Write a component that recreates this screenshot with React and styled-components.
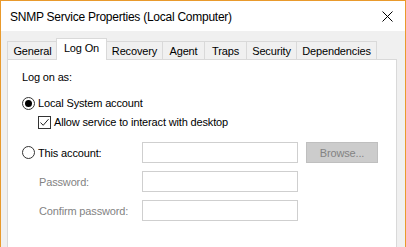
import React from "react";
import styled, { createGlobalStyle } from "styled-components";

const GlobalStyle = createGlobalStyle`
  html, body {
    margin: 0;
    padding: 0;
    background: #f0f0f0;
  }
  * {
    box-sizing: border-box;
  }
`;

const tabs = [
  { name: "General", width: 51, shift: 0 },
  { name: "Log On", width: 51, shift: -2, active: true },
  { name: "Recovery", width: 57, shift: -1 },
  { name: "Agent", width: 43, shift: -1 },
  { name: "Traps", width: 43, shift: -1 },
  { name: "Security", width: 51, shift: -1 },
  { name: "Dependencies", width: 81, shift: -1 },
];

const Window = styled.div`
  width: 406px;
  height: 247px;
  overflow: hidden;
  border: 1px solid #e99a2c;
  border-bottom: none;
  background: #f0f0f0;
  font-family: "Liberation Sans", Arial, sans-serif;
  font-size: 11px;
  letter-spacing: -0.15px;
  color: #000;
`;

const TitleBar = styled.div`
  height: 30px;
  background: #fff;
  display: flex;
  align-items: center;
  justify-content: space-between;
  padding: 0 11px 0 9px;
`;

const Title = styled.div`
  font-size: 12px;
  letter-spacing: -0.25px;
  padding-top: 1px;
`;

const Close = styled.svg`
  width: 11px;
  height: 11px;
  margin-right: 1px;
`;

const Body = styled.div`
  padding: 7px 8px 0 6px;
`;

const TabStrip = styled.div`
  display: flex;
  align-items: flex-end;
  height: 21px;
`;

const Tab = styled.div`
  position: relative;
  flex: none;
  width: ${(p) => p.$width}px;
  margin-left: ${(p) => p.$shift}px;
  height: ${(p) => (p.$active ? 22 : 18)}px;
  margin-bottom: ${(p) => (p.$active ? -1 : 0)}px;
  z-index: ${(p) => (p.$active ? 2 : 1)};
  background: ${(p) => (p.$active ? "#fff" : "#f0f0f0")};
  border: 1px solid #d9d9d9;
  border-bottom: none;
  display: flex;
  justify-content: center;
  padding-top: 2px;
  line-height: 14px;
`;

const Panel = styled.div`
  background: #fff;
  border: 1px solid #d9d9d9;
  height: 200px;
  padding: 10px 14px 0;
  display: flex;
  flex-direction: column;
`;

const Heading = styled.div`
  height: 15px;
  line-height: 15px;
`;

const OptionRow = styled.div`
  display: flex;
  align-items: center;
  gap: 3px;
  height: 16px;
  margin-top: ${(p) => p.$top}px;
  margin-left: ${(p) => p.$indent || 0}px;
`;

const Radio = styled.span`
  width: 13px;
  height: 13px;
  border-radius: 50%;
  border: 1px solid #333;
  display: flex;
  align-items: center;
  justify-content: center;
  flex: none;
  &::after {
    content: "";
    width: 7px;
    height: 7px;
    border-radius: 50%;
    background: ${(p) => (p.$checked ? "#000" : "transparent")};
  }
`;

const Check = styled.span`
  width: 13px;
  height: 13px;
  border: 1px solid #333;
  display: flex;
  align-items: center;
  justify-content: center;
  flex: none;
`;

const FieldGrid = styled.div`
  display: grid;
  grid-template-columns: 113px 156px 73px;
  column-gap: 7px;
  row-gap: 8px;
  margin-top: 12px;
  align-items: center;
`;

const FieldLabel = styled.div`
  display: flex;
  align-items: center;
  gap: 3px;
  padding-left: ${(p) => (p.$disabled ? 17 : 0)}px;
  color: ${(p) => (p.$disabled ? "#838383" : "#000")};
`;

const Input = styled.div`
  height: 21px;
  border: 1px solid #cfcfcf;
  background: #fff;
`;

const Button = styled.div`
  height: 21px;
  margin-left: 1px;
  background: #cccccc;
  border: 1px solid #bfbfbf;
  color: #838383;
  display: flex;
  align-items: center;
  justify-content: center;
`;

export default function App() {
  return (
    <Window>
      <GlobalStyle />
      <TitleBar>
        <Title>SNMP Service Properties (Local Computer)</Title>
        <Close viewBox="0 0 11 11">
          <path d="M0.5 0.5 L10.5 10.5 M10.5 0.5 L0.5 10.5" stroke="#000" strokeWidth="1" fill="none" />
        </Close>
      </TitleBar>
      <Body>
        <TabStrip>
          {tabs.map((t) => (
            <Tab key={t.name} $width={t.width} $shift={t.shift} $active={t.active}>
              {t.name}
            </Tab>
          ))}
        </TabStrip>
        <Panel>
          <Heading>Log on as:</Heading>
          <OptionRow $top={10}>
            <Radio $checked />
            <span>Local System account</span>
          </OptionRow>
          <OptionRow $top={3} $indent={16}>
            <Check>
              <svg width="11" height="11" viewBox="0 0 11 11">
                <path d="M1.5 5.5 L4.2 8.3 L9.5 2.2" stroke="#222" strokeWidth="1" fill="none" />
              </svg>
            </Check>
            <span>Allow service to interact with desktop</span>
          </OptionRow>
          <FieldGrid>
            <FieldLabel>
              <Radio />
              <span>This account:</span>
            </FieldLabel>
            <Input />
            <Button>Browse...</Button>
            <FieldLabel $disabled>Password:</FieldLabel>
            <Input />
            <span />
            <FieldLabel $disabled>Confirm password:</FieldLabel>
            <Input />
            <span />
          </FieldGrid>
        </Panel>
      </Body>
    </Window>
  );
}
